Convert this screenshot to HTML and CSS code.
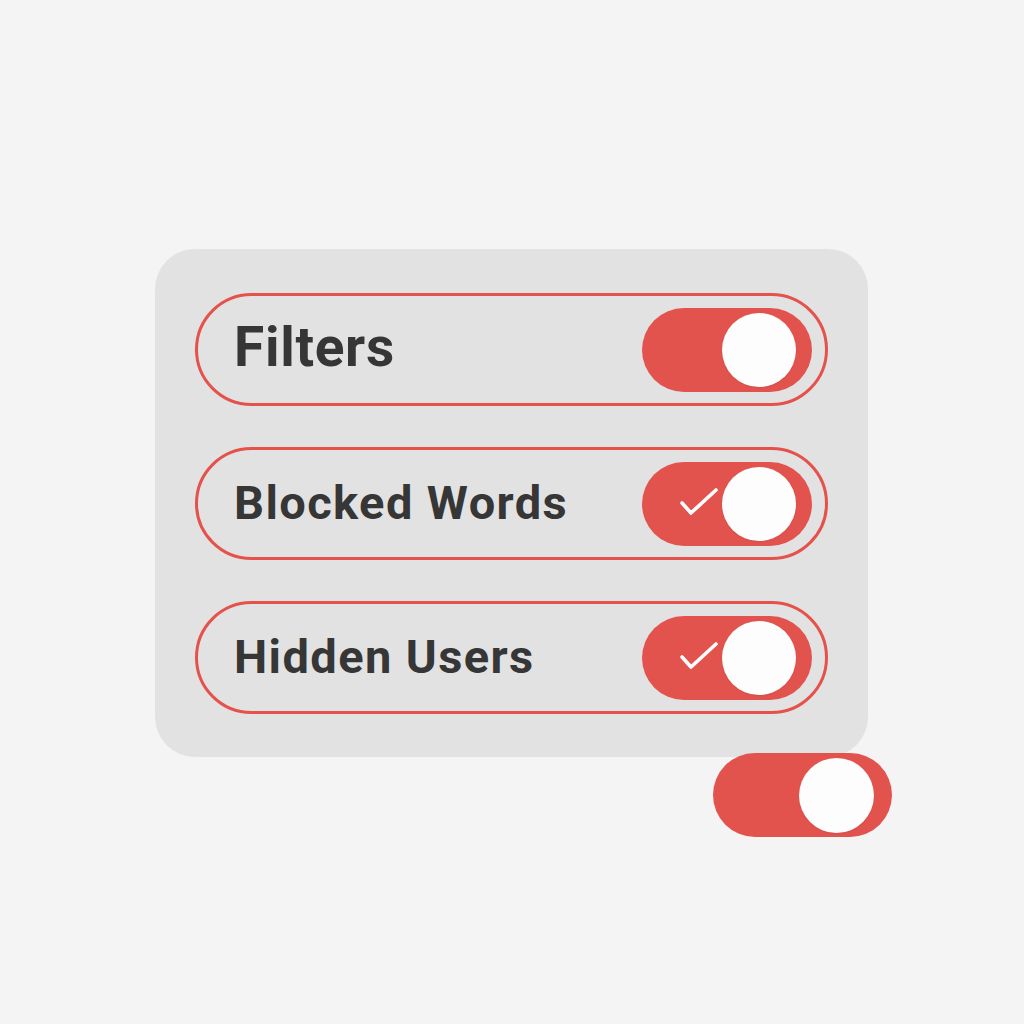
FILE: index.html
```html
<!DOCTYPE html>
<html>
<head>
<meta charset="utf-8">
<link rel="stylesheet" href="styles.css">
</head>
<body>
<div class="stage">
  <div class="panel">
    <div class="row">
      <span class="label label-lg">Filters</span>
      <div class="toggle"><span class="knob"></span></div>
    </div>
    <div class="row">
      <span class="label">Blocked Words</span>
      <div class="toggle">
        <svg class="check" viewBox="0 0 38 28" width="38" height="28"><path d="M2 15 L11 25 L36 2" fill="none" stroke="#fff" stroke-width="3.6" stroke-linecap="round" stroke-linejoin="round"/></svg>
        <span class="knob"></span>
      </div>
    </div>
    <div class="row">
      <span class="label">Hidden Users</span>
      <div class="toggle">
        <svg class="check" viewBox="0 0 38 28" width="38" height="28"><path d="M2 15 L11 25 L36 2" fill="none" stroke="#fff" stroke-width="3.6" stroke-linecap="round" stroke-linejoin="round"/></svg>
        <span class="knob"></span>
      </div>
    </div>
    <div class="toggle toggle-float"><span class="knob"></span></div>
  </div>
</div>
</body>
</html>
```
FILE: styles.css
```css
html, body {
  margin: 0;
  padding: 0;
  background: #f4f4f4;
  width: 1024px;
  height: 1024px;
  overflow: hidden;
  font-family: Roboto, "Liberation Sans", sans-serif;
}
.stage {
  padding-top: 249px;
  padding-left: 155px;
}
.panel {
  position: relative;
  box-sizing: border-box;
  width: 713px;
  height: 508px;
  background: #e2e2e2;
  border-radius: 40px;
  padding: 44px 40px 0 40px;
  display: flex;
  flex-direction: column;
  gap: 41px;
}
.row {
  box-sizing: border-box;
  height: 113px;
  border: 3px solid #e5524c;
  border-radius: 57px;
  display: flex;
  align-items: center;
  justify-content: space-between;
  padding: 0 13px 0 36px;
}
.label {
  font-weight: 700;
  font-size: 47px;
  color: #363636;
  letter-spacing: 1.4px;
  margin-top: -2px;
}
.label-lg {
  font-size: 55px;
  letter-spacing: 0.7px;
  margin-top: -6px;
}
.toggle {
  box-sizing: border-box;
  width: 170px;
  height: 84px;
  border-radius: 42px;
  background: #e2534e;
  display: flex;
  align-items: center;
  justify-content: flex-end;
  padding-right: 16px;
  gap: 4px;
}
.knob {
  width: 74px;
  height: 74px;
  border-radius: 50%;
  background: #fdfdfd;
  box-shadow: 0 1px 2px rgba(0,0,0,0.08);
}
.check {
  margin-top: -3px;
}
.toggle-float {
  position: absolute;
  left: 558px;
  top: 504px;
  width: 179px;
  padding-right: 18px;
}
.toggle-float .knob {
  width: 75px;
  height: 75px;
}
```
